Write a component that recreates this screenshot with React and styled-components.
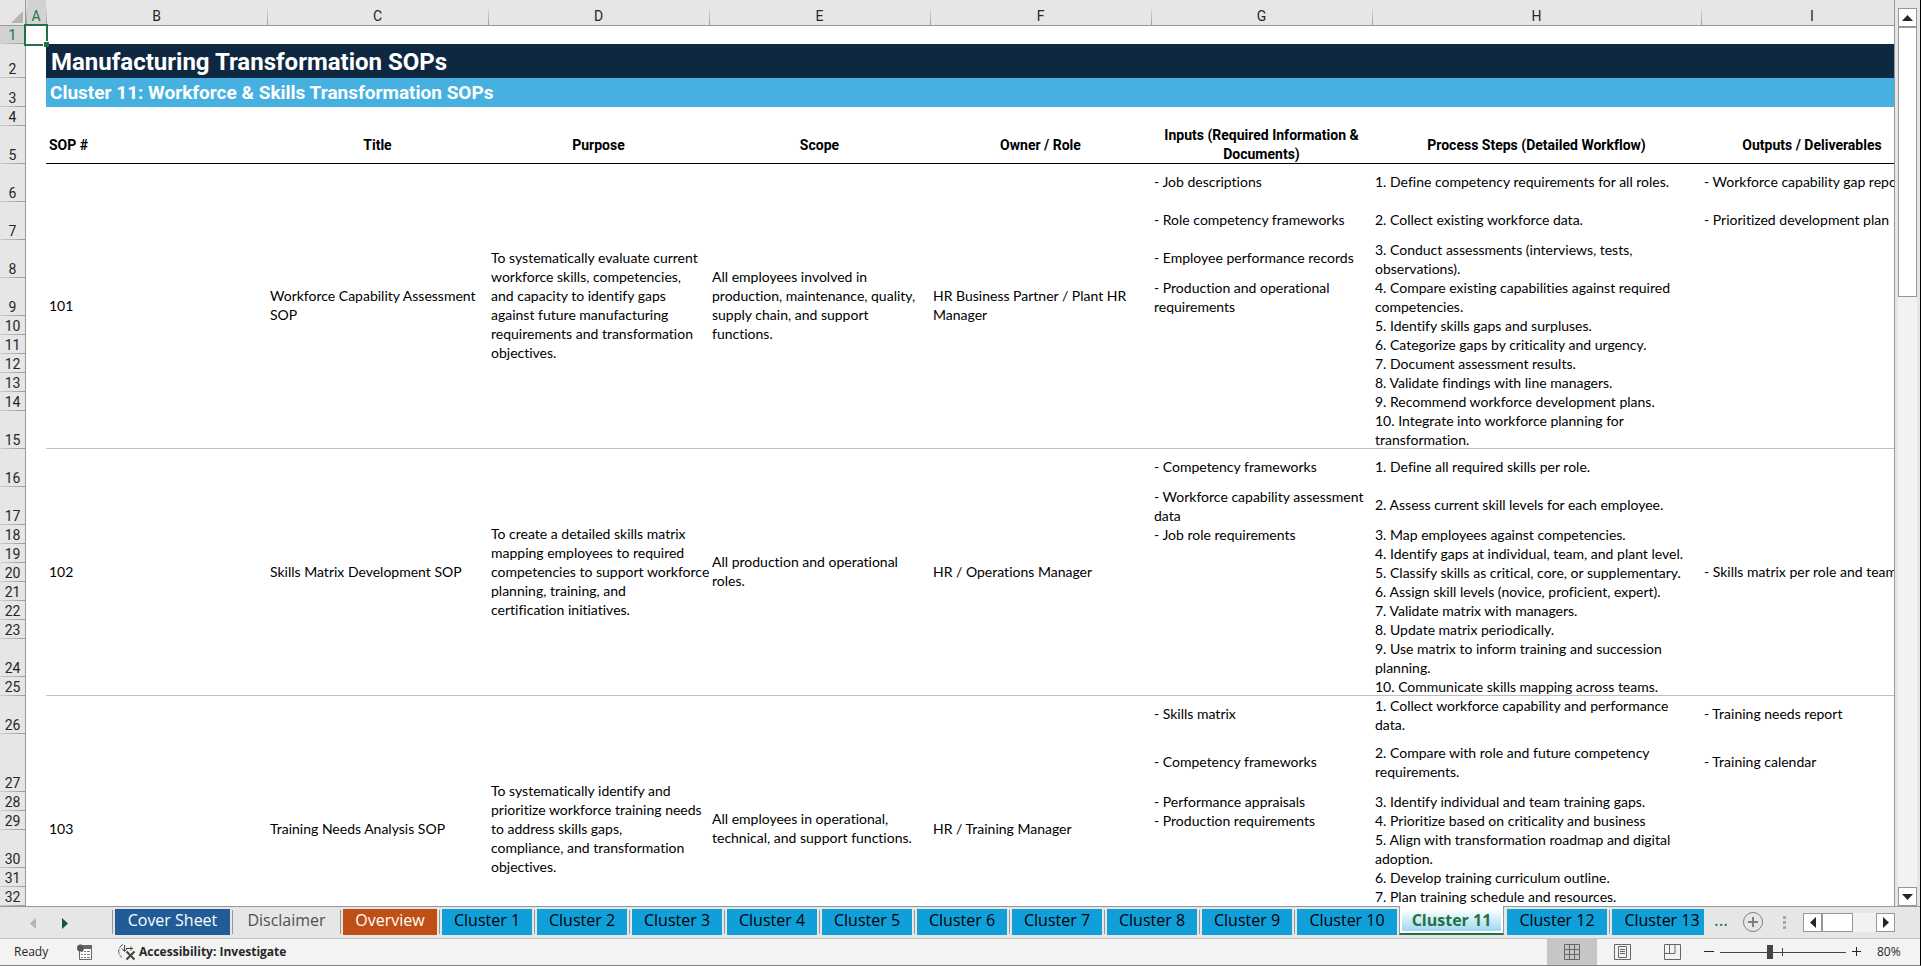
import React from "react";
import styled, { createGlobalStyle, css } from "styled-components";

const GlobalStyle = createGlobalStyle`
  html,
  body {
    margin: 0;
    background: #e6e6e6;
  }
  *,
  *::before,
  *::after {
    box-sizing: border-box;
  }
  button {
    font: inherit;
    color: inherit;
    margin: 0;
    padding: 0;
    border: 0;
    background: none;
  }
  svg {
    display: block;
  }
`;

const Window = styled.div`
  display: flex;
  flex-direction: column;
  height: 100vh;
  overflow: hidden;
  background: #e6e6e6;
  border-right: 1px solid #000;
  border-bottom: 1px solid #858585;
  font-family: "Open Sans", "Noto Sans", sans-serif;
  color: #262626;
`;

const Workspace = styled.main`
  display: flex;
  flex: 1;
  min-height: 0;
`;

const Grid = styled.div`
  flex: 1;
  min-width: 0;
  overflow: hidden;
  border-right: 1px solid #979797;
`;

const Sheet = styled.table`
  table-layout: fixed;
  width: 1923px;
  border-spacing: 0;
  background: #fff;
  font-family: Lato, "Open Sans", sans-serif;
  font-size: 14px;
  font-variant-ligatures: none;
  line-height: 19px;
  color: #000;
`;

const Corner = styled.td`
  height: 26px;
  padding: 0 3px 3px 0;
  background: #e6e6e6;
  box-shadow: inset -1px -1px 0 #979797;
  vertical-align: bottom;
  svg {
    margin-left: auto;
  }
`;

const ColHead = styled.th`
  height: 26px;
  padding: 6px 0 0;
  background: linear-gradient(#e6e6e6 6px, #9a9a9a) left / 1px 100% no-repeat
    ${(p) => (p.$active ? "#d2d2d2" : "#e6e6e6")};
  box-shadow: inset 0 -1px 0 ${(p) => (p.$active ? "#217346" : "#979797")};
  color: ${(p) => (p.$active ? "#217346" : "#262626")};
  font-family: Roboto, sans-serif;
  font-size: 14px;
  font-weight: 400;
  text-align: center;
`;

const RowHead = styled.th`
  padding: 0 1px 0 0;
  background: linear-gradient(90deg, #d0d0d0, #979797) bottom / 100% 1px
    no-repeat ${(p) => (p.$active ? "#d2d2d2" : "#e6e6e6")};
  box-shadow: inset -1px 0 0 ${(p) => (p.$active ? "#217346" : "#979797")};
  color: ${(p) => (p.$active ? "#217346" : "#262626")};
  font-family: Roboto, sans-serif;
  font-size: 14px;
  line-height: 18px;
  font-weight: 400;
  text-align: center;
  vertical-align: bottom;
`;

const Row = styled.tr`
  height: ${(p) => p.$height}px;
`;

const Cell = styled.td`
  padding: 0 3px ${(p) => (p.$roomy ? 3 : 0)}px;
  white-space: pre;
  vertical-align: middle;
  ${(p) => p.$ruled && "box-shadow: inset 0 -1px 0 #bfbfbf;"}
`;

const HeadCell = styled.th`
  padding: 0 3px;
  white-space: pre;
  font-family: Roboto, sans-serif;
  font-weight: 700;
  text-align: ${(p) => p.$align || "center"};
  box-shadow: inset 0 -1px 0 #000;
`;

const Banner = styled.td`
  padding: 2px 5px 0;
  color: #fff;
  font-family: Roboto, sans-serif;
  font-weight: 700;
  background: #0f2841;
  font-size: 24px;
  line-height: 32px;
  ${(p) =>
    p.$sub &&
    css`
      padding: 0 4px;
      background: #46b1e1;
      font-size: 19px;
      line-height: 28px;
    `}
`;

const SelectedCell = styled.td`
  position: relative;
  padding: 0;
`;

const Selection = styled.div`
  position: absolute;
  inset: -2px;
  border: 2px solid #217346;
  &::after {
    content: "";
    position: absolute;
    right: -3px;
    bottom: -3px;
    width: 6px;
    height: 6px;
    background: #217346;
    border: solid #fff;
    border-width: 1px 0 0 1px;
  }
`;

const VScroll = styled.div`
  display: flex;
  flex-direction: column;
  width: 19px;
  margin: 8px 3px 0;
  background: #f2f2f2;
`;

const ScrollButton = styled.button`
  display: flex;
  align-items: center;
  justify-content: center;
  flex: none;
  width: 19px;
  height: 19px;
  border: 1px solid #979797;
  background: #fff;
`;

const VThumb = styled.div`
  height: 270px;
  border: 1px solid #979797;
  background: #fff;
  margin-bottom: auto;
`;

const TabBar = styled.nav`
  display: flex;
  flex: none;
  height: 33px;
  border-bottom: 1px solid #c6c6c6;
`;

const TabNav = styled.div`
  display: flex;
  align-items: flex-start;
  gap: 26px;
  flex: none;
  width: 112px;
  padding: 11px 0 0 30px;
  border-top: 1px solid #979797;
`;

const TabList = styled.div`
  display: flex;
  flex: 1;
  min-width: 0;
  overflow: hidden;
`;

const TabSlot = styled.div`
  flex: none;
  width: ${(p) => p.$width}px;
  padding: 2px 2px 3px 3px;
  border-top: 1px solid #979797;
  background: ${(p) =>
    p.$plain
      ? "none"
      : "linear-gradient(#979797, #979797) left 3px / 1px 24px no-repeat"};
  ${(p) =>
    p.$active &&
    css`
      height: 29px;
      padding: 3px 2px 2px 2px;
      border: 1px solid #979797;
      border-top: 0;
      border-bottom: 2px solid #217346;
      background: #fff;
    `}
`;

const Tab = styled.button`
  display: block;
  width: 100%;
  height: 26px;
  font-size: 16px;
  line-height: 22px;
  padding-bottom: 4px;
  text-align: center;
  white-space: nowrap;
  background: ${(p) => p.$fill};
  color: ${(p) => p.$ink};
  ${(p) =>
    p.$active &&
    css`
      height: 22px;
      padding: 0;
      font-weight: 700;
      background: linear-gradient(#fff, #9fd8f0);
    `}
`;

const TabTools = styled.div`
  display: flex;
  align-items: flex-start;
  flex: none;
  width: 216px;
  border-top: 1px solid #979797;
`;

const MoreTabs = styled.button`
  width: 34px;
  font-size: 18px;
  line-height: 24px;
  color: #1e6b41;
`;

const AddSheet = styled.button`
  margin: 5px 20px 0 5px;
`;

const Grip = styled.div`
  width: 3px;
  height: 13px;
  margin: 9px 17px 0 0;
  background: repeating-linear-gradient(#a6a6a6 0 3px, transparent 3px 5px);
`;

const HScroll = styled.div`
  display: flex;
  width: 92px;
  margin-top: 6px;
  background: #f2f2f2;
`;

const HThumb = styled.div`
  width: 31px;
  margin-right: auto;
  border: 1px solid #979797;
  background: #fff;
`;

const StatusBar = styled.footer`
  display: flex;
  flex: none;
  align-items: stretch;
  height: 26px;
  background: #f3f3f3;
  font-size: 12px;
  line-height: 26px;
`;

const StatusText = styled.span`
  width: 77px;
  padding-left: 14px;
`;

const StatusButton = styled.button`
  display: flex;
  align-items: center;
  gap: 3px;
  margin-right: ${(p) => p.$after || 0}px;
  font-weight: ${(p) => (p.$strong ? 700 : 400)};
`;

const ViewButtons = styled.div`
  display: flex;
  margin-left: auto;
`;

const ViewButton = styled.button`
  display: flex;
  align-items: center;
  justify-content: center;
  width: 50px;
  background: ${(p) => (p.$active ? "#c6c6c6" : "none")};
`;

const Zoom = styled.div`
  display: flex;
  align-items: center;
  width: 223px;
  padding-left: 7px;
`;

const ZoomSlider = styled.input`
  appearance: none;
  width: 126px;
  height: 14px;
  margin: 0 6px;
  background: linear-gradient(#444, #444) 62px center / 1px 8px no-repeat,
    linear-gradient(#444, #444) center / 100% 1px no-repeat;
  &::-webkit-slider-thumb {
    appearance: none;
    width: 6px;
    height: 14px;
    background: #444;
  }
`;

const ZoomValue = styled.output`
  margin-left: 15px;
`;

const COLUMNS = [
  ["A", 20],
  ["B", 221],
  ["C", 221],
  ["D", 221],
  ["E", 221],
  ["F", 221],
  ["G", 221],
  ["H", 329],
  ["I", 222],
];

const HEADINGS = [
  "SOP #",
  "Title",
  "Purpose",
  "Scope",
  "Owner / Role",
  "Inputs (Required Information &\nDocuments)",
  "Process Steps (Detailed Workflow)",
  "Outputs / Deliverables",
];

// every procedure takes one sheet row per process step
const SOPS = [
  {
    id: "101",
    title: "Workforce Capability Assessment\nSOP",
    purpose:
      "To systematically evaluate current\nworkforce skills, competencies,\nand capacity to identify gaps\nagainst future manufacturing\nrequirements and transformation\nobjectives.",
    scope:
      "All employees involved in\nproduction, maintenance, quality,\nsupply chain, and support\nfunctions.",
    owner: "HR Business Partner / Plant HR\nManager",
    inputs: [
      "- Job descriptions",
      "- Role competency frameworks",
      "- Employee performance records",
      "- Production and operational\nrequirements",
    ],
    steps: [
      [38, "1. Define competency requirements for all roles."],
      [38, "2. Collect existing workforce data."],
      [38, "3. Conduct assessments (interviews, tests,\nobservations)."],
      [38, "4. Compare existing capabilities against required\ncompetencies."],
      [19, "5. Identify skills gaps and surpluses."],
      [19, "6. Categorize gaps by criticality and urgency."],
      [19, "7. Document assessment results."],
      [19, "8. Validate findings with line managers."],
      [19, "9. Recommend workforce development plans."],
      [38, "10. Integrate into workforce planning for\ntransformation."],
    ],
    outputs: ["- Workforce capability gap report", "- Prioritized development plan"],
  },
  {
    id: "102",
    title: "Skills Matrix Development SOP",
    purpose:
      "To create a detailed skills matrix\nmapping employees to required\ncompetencies to support workforce\nplanning, training, and\ncertification initiatives.",
    scope: "All production and operational\nroles.",
    owner: "HR / Operations Manager",
    inputs: [
      "- Competency frameworks",
      "- Workforce capability assessment\ndata",
      "- Job role requirements",
    ],
    steps: [
      [38, "1. Define all required skills per role."],
      [38, "2. Assess current skill levels for each employee."],
      [19, "3. Map employees against competencies."],
      [19, "4. Identify gaps at individual, team, and plant level."],
      [19, "5. Classify skills as critical, core, or supplementary."],
      [19, "6. Assign skill levels (novice, proficient, expert)."],
      [19, "7. Validate matrix with managers."],
      [19, "8. Update matrix periodically."],
      [38, "9. Use matrix to inform training and succession\nplanning."],
      [19, "10. Communicate skills mapping across teams."],
    ],
    mergedOutput: "- Skills matrix per role and team",
  },
  {
    id: "103",
    title: "Training Needs Analysis SOP",
    purpose:
      "To systematically identify and\nprioritize workforce training needs\nto address skills gaps,\ncompliance, and transformation\nobjectives.",
    scope: "All employees in operational,\ntechnical, and support functions.",
    owner: "HR / Training Manager",
    inputs: [
      "- Skills matrix",
      "- Competency frameworks",
      "- Performance appraisals",
      "- Production requirements",
    ],
    steps: [
      [38, "1. Collect workforce capability and performance\ndata."],
      [58, "2. Compare with role and future competency\nrequirements."],
      [19, "3. Identify individual and team training gaps."],
      [19, "4. Prioritize based on criticality and business"],
      [38, "5. Align with transformation roadmap and digital\nadoption."],
      [19, "6. Develop training curriculum outline."],
      [19, "7. Plan training schedule and resources."],
      [57, ""],
    ],
    outputs: ["- Training needs report", "- Training calendar"],
  },
];

const BLUE = "#119fd9";

const TABS = [
  { name: "Cover Sheet", width: 120, fill: "#215c98", ink: "#fff" },
  { name: "Disclaimer", width: 108, fill: "none", ink: "#505050" },
  { name: "Overview", width: 99, fill: "#c04f15", ink: "#fff" },
  ...[1, 2, 3, 4, 5, 6, 7, 8, 9].map((n) => ({
    name: `Cluster ${n}`,
    width: 95,
    fill: BLUE,
    ink: "#000",
  })),
  { name: "Cluster 10", width: 105, fill: BLUE, ink: "#000" },
  { name: "Cluster 11", width: 105, active: true, ink: "#217346" },
  { name: "Cluster 12", width: 105, fill: BLUE, ink: "#000", plain: true },
  { name: "Cluster 13", width: 105, fill: BLUE, ink: "#000" },
];

const ARROWS = {
  up: ["0,6 11,6 5.5,0", 11, 6],
  down: ["0,0 11,0 5.5,6", 11, 6],
  left: ["6,0 6,11 0,5.5", 6, 11],
  right: ["0,0 0,11 6,5.5", 6, 11],
};

function Arrow({ dir, color = "#262626" }) {
  const [points, w, h] = ARROWS[dir];
  return (
    <svg width={w} height={h} viewBox={`0 0 ${w} ${h}`} aria-hidden="true">
      <polygon points={points} fill={color} />
    </svg>
  );
}

function MacroIcon() {
  return (
    <svg width="16" height="16" viewBox="0 0 16 16" aria-hidden="true">
      <path d="M2.500 7v8.500h12V1.500H6" fill="#fff" stroke="#666" />
      <path d="M7 1h8v4H7z" fill="#666" />
      <circle cx="3.5" cy="4" r="3.500" fill="#555" />
      <path
        d="M4 7.500h2m1 0h2m1 0h3M4 10.500h2m1 0h2m1 0h3M4 13.500h2m1 0h2m1 0h3"
        stroke="#777"
      />
    </svg>
  );
}

function AccessibilityIcon() {
  return (
    <svg width="20" height="18" viewBox="0 0 20 18" fill="none" aria-hidden="true">
      <path d="M7 1.500A7.500 7.500 0 0 0 6 14.500" stroke="#555" strokeDasharray="5 1" />
      <path d="M8.500 2v6M6 5.500l2.500 3 2.500-3M10 5.500h7M15 3.500v4" stroke="#444" />
      <path d="M10.500 8.500l8 8M18.500 8.500l-8 8" stroke="#444" strokeWidth="2" />
    </svg>
  );
}

function SopRows({ sop, first }) {
  const span = sop.steps.length;
  return sop.steps.map(([height, step], i) => {
    const ruled = i === span - 1;
    const cells = [sop.inputs[i], step];
    if (!sop.mergedOutput) cells.push(sop.outputs[i]);
    return (
      <Row key={i} $height={height}>
        <RowHead scope="row">{step && first + i}</RowHead>
        <Cell />
        {i === 0 &&
          [sop.id, sop.title, sop.purpose, sop.scope, sop.owner].map((text) => (
            <Cell key={text} rowSpan={span} $ruled $roomy>
              {text}
            </Cell>
          ))}
        {cells.map((text = "", n) => (
          <Cell
            key={n}
            $ruled={ruled}
            $roomy={height > text.split("\n").length * 19}
          >
            {text}
          </Cell>
        ))}
        {i === 0 && sop.mergedOutput && (
          <Cell rowSpan={span} $ruled $roomy>
            {sop.mergedOutput}
          </Cell>
        )}
      </Row>
    );
  });
}

function SheetGrid() {
  return (
    <Grid>
      <Sheet>
        <colgroup>
          <col style={{ width: 26 }} />
          {COLUMNS.map(([name, width]) => (
            <col key={name} style={{ width }} />
          ))}
        </colgroup>
        <thead>
          <tr>
            <Corner>
              <svg width="12" height="12" viewBox="0 0 12 12" aria-hidden="true">
                <polygon points="12,0 12,12 0,12" fill="#b4b4b4" />
              </svg>
            </Corner>
            {COLUMNS.map(([name]) => (
              <ColHead key={name} scope="col" $active={name === "A"}>
                {name}
              </ColHead>
            ))}
          </tr>
        </thead>
        <tbody>
          <Row $height={18}>
            <RowHead scope="row" $active>
              1
            </RowHead>
            <SelectedCell>
              <Selection />
            </SelectedCell>
            <Cell colSpan={8} />
          </Row>
          <Row $height={34}>
            <RowHead scope="row">2</RowHead>
            <Cell />
            <Banner colSpan={8}>Manufacturing Transformation SOPs</Banner>
          </Row>
          <Row $height={29}>
            <RowHead scope="row">3</RowHead>
            <Cell />
            <Banner colSpan={8} $sub>
              Cluster 11: Workforce &amp; Skills Transformation SOPs
            </Banner>
          </Row>
          <Row $height={19}>
            <RowHead scope="row">4</RowHead>
            <Cell colSpan={9} />
          </Row>
          <Row $height={38}>
            <RowHead scope="row">5</RowHead>
            <Cell />
            {HEADINGS.map((text, i) => (
              <HeadCell key={text} scope="col" $align={i === 0 ? "left" : "center"}>
                {text}
              </HeadCell>
            ))}
          </Row>
          {SOPS.map((sop, i) => (
            <SopRows key={sop.id} sop={sop} first={6 + i * 10} />
          ))}
        </tbody>
      </Sheet>
    </Grid>
  );
}

function SheetTabs() {
  return (
    <TabBar aria-label="Sheets">
      <TabNav>
        <button aria-label="Previous sheets">
          <Arrow dir="left" color="#b4b4b4" />
        </button>
        <button aria-label="Next sheets">
          <Arrow dir="right" color="#0e5c2f" />
        </button>
      </TabNav>
      <TabList>
        {TABS.map((tab) => (
          <TabSlot
            key={tab.name}
            $width={tab.width}
            $active={tab.active}
            $plain={tab.plain}
          >
            <Tab $fill={tab.fill} $ink={tab.ink} $active={tab.active}>
              {tab.name}
            </Tab>
          </TabSlot>
        ))}
      </TabList>
      <TabTools>
        <MoreTabs aria-label="More sheets">...</MoreTabs>
        <AddSheet aria-label="New sheet">
          <svg width="20" height="20" viewBox="0 0 20 20" fill="none" aria-hidden="true">
            <circle cx="10" cy="10" r="9.500" stroke="#7f7f7f" />
            <path d="M10 5v10M5 10h10" stroke="#7f7f7f" strokeWidth="2" />
          </svg>
        </AddSheet>
        <Grip />
        <HScroll>
          <ScrollButton aria-label="Scroll left">
            <Arrow dir="left" />
          </ScrollButton>
          <HThumb />
          <ScrollButton aria-label="Scroll right">
            <Arrow dir="right" />
          </ScrollButton>
        </HScroll>
      </TabTools>
    </TabBar>
  );
}

function Status() {
  return (
    <StatusBar>
      <StatusText>Ready</StatusText>
      <StatusButton aria-label="Record macro" $after={23}>
        <MacroIcon />
      </StatusButton>
      <StatusButton $strong>
        <AccessibilityIcon />
        Accessibility: Investigate
      </StatusButton>
      <ViewButtons>
        <ViewButton aria-label="Normal" $active>
          <svg width="16" height="16" viewBox="0 0 16 16" fill="none" stroke="#666" aria-hidden="true">
            <path d="M.5.500h15v15H.5zM5.500.500v15M10.500.500v15M.5 5.500h15M.5 10.500h15" />
          </svg>
        </ViewButton>
        <ViewButton aria-label="Page layout">
          <svg width="17" height="16" viewBox="0 0 17 16" fill="none" stroke="#666" aria-hidden="true">
            <path d="M.5.500h16v15H.5zM4.500 2.500h8v11h-8zM6 5.500h5M6 7.500h5M6 9.500h5" />
          </svg>
        </ViewButton>
        <ViewButton aria-label="Page break preview">
          <svg width="17" height="16" viewBox="0 0 17 16" fill="none" stroke="#666" aria-hidden="true">
            <path d="M.5.500h16v15H.5zM.5 9.500h10.500V.500M5.500.500v9" />
          </svg>
        </ViewButton>
      </ViewButtons>
      <Zoom>
        <button aria-label="Zoom out">
          <svg width="10" height="10" viewBox="0 0 10 10" aria-hidden="true">
            <path d="M0 4.500h10" stroke="#262626" />
          </svg>
        </button>
        <ZoomSlider type="range" aria-label="Zoom" min="10" max="190" defaultValue="80" id="zoom" />
        <button aria-label="Zoom in">
          <svg width="10" height="10" viewBox="0 0 10 10" aria-hidden="true">
            <path d="M0 4.500h9M4.500 0v9" stroke="#262626" />
          </svg>
        </button>
        <ZoomValue htmlFor="zoom">80%</ZoomValue>
      </Zoom>
    </StatusBar>
  );
}

export default function App() {
  return (
    <>
      <GlobalStyle />
      <Window>
        <Workspace>
          <SheetGrid />
          <VScroll>
            <ScrollButton aria-label="Scroll up">
              <Arrow dir="up" />
            </ScrollButton>
            <VThumb />
            <ScrollButton aria-label="Scroll down">
              <Arrow dir="down" />
            </ScrollButton>
          </VScroll>
        </Workspace>
        <SheetTabs />
        <Status />
      </Window>
    </>
  );
}
